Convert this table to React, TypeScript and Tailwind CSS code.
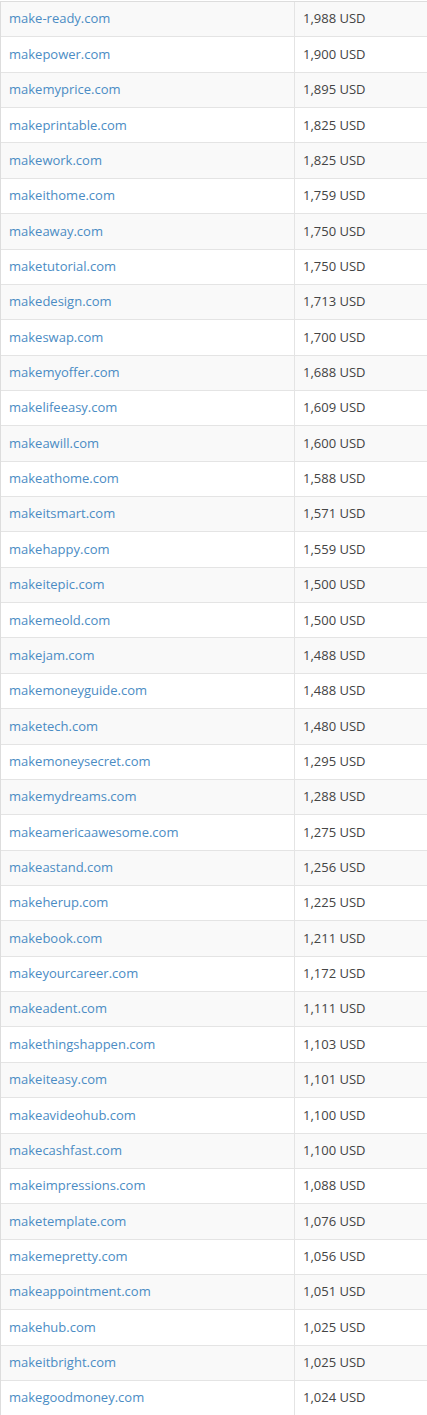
const ROWS: [string, string][] = [
  ['make-ready.com', '1,988'],
  ['makepower.com', '1,900'],
  ['makemyprice.com', '1,895'],
  ['makeprintable.com', '1,825'],
  ['makework.com', '1,825'],
  ['makeithome.com', '1,759'],
  ['makeaway.com', '1,750'],
  ['maketutorial.com', '1,750'],
  ['makedesign.com', '1,713'],
  ['makeswap.com', '1,700'],
  ['makemyoffer.com', '1,688'],
  ['makelifeeasy.com', '1,609'],
  ['makeawill.com', '1,600'],
  ['makeathome.com', '1,588'],
  ['makeitsmart.com', '1,571'],
  ['makehappy.com', '1,559'],
  ['makeitepic.com', '1,500'],
  ['makemeold.com', '1,500'],
  ['makejam.com', '1,488'],
  ['makemoneyguide.com', '1,488'],
  ['maketech.com', '1,480'],
  ['makemoneysecret.com', '1,295'],
  ['makemydreams.com', '1,288'],
  ['makeamericaawesome.com', '1,275'],
  ['makeastand.com', '1,256'],
  ['makeherup.com', '1,225'],
  ['makebook.com', '1,211'],
  ['makeyourcareer.com', '1,172'],
  ['makeadent.com', '1,111'],
  ['makethingshappen.com', '1,103'],
  ['makeiteasy.com', '1,101'],
  ['makeavideohub.com', '1,100'],
  ['makecashfast.com', '1,100'],
  ['makeimpressions.com', '1,088'],
  ['maketemplate.com', '1,076'],
  ['makemepretty.com', '1,056'],
  ['makeappointment.com', '1,051'],
  ['makehub.com', '1,025'],
  ['makeitbright.com', '1,025'],
  ['makegoodmoney.com', '1,024'],
];

export default function App() {
  return (
    <div className="w-[427px] bg-white pt-px font-['Open_Sans',sans-serif] text-[13px]">
      <div className="border-t border-l border-[#ddd]">
        {ROWS.map(([domain, price], i) => (
          <div
            key={domain}
            className={`flex h-[35.36px] items-center border-b border-[#e4e4e4] ${
              i % 2 === 0 ? 'bg-[#f9f9f9]' : 'bg-white'
            }`}
          >
            <div className="flex h-full w-[294px] items-center border-r border-[#e4e4e4] pl-2">
              <a href="#" className="text-[#4b8cc4] no-underline">
                {domain}
              </a>
            </div>
            <div className="pl-2 text-[#444]">{price} USD</div>
          </div>
        ))}
      </div>
    </div>
  );
}
